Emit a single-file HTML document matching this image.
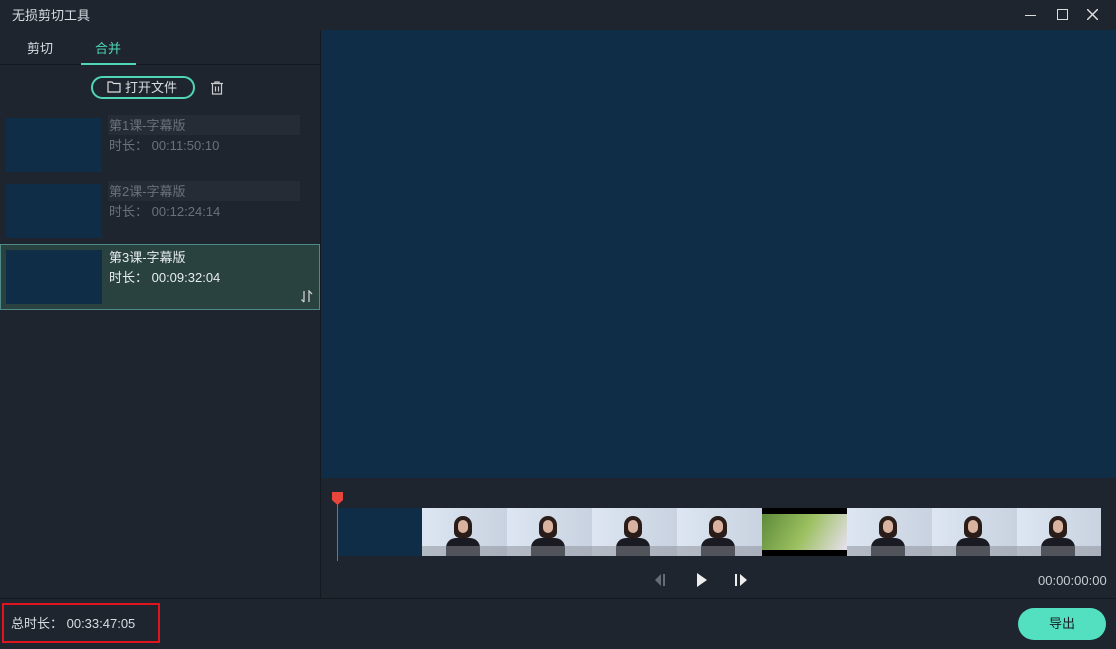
<!DOCTYPE html><html><head><meta charset="utf-8"><style>
*{margin:0;padding:0;box-sizing:border-box}
body{width:1116px;height:649px;background:#1f252e;font-family:"Liberation Sans","Noto Sans CJK SC",sans-serif;color:#d8dde2;position:relative;overflow:hidden;font-size:13px;line-height:17px}
.a{position:absolute}
.th{background:#0f2d47}
.fr{position:absolute;top:508px;width:85px;height:48px;background:linear-gradient(90deg,#dde6f2,#c8d2e0);overflow:hidden}
.fr .h{position:absolute;left:32px;top:8px;width:18px;height:22px;border-radius:9px 9px 6px 6px;background:#2a1c18}
.fr .f{position:absolute;left:36px;top:12px;width:10px;height:13px;border-radius:5px;background:#d9b3a0}
.fr .b{position:absolute;left:24px;top:30px;width:34px;height:18px;border-radius:10px 10px 0 0;background:#1a1a22}
.fr .d{position:absolute;left:0;bottom:0;width:85px;height:10px;background:#8a8e96;opacity:.5}
</style></head><body>
<div class="a" style="left:0;top:0;width:1116px;height:30px;background:#1e252e"></div>
<div class="a" style="left:12px;top:7px;font-size:13px">无损剪切工具</div>
<div class="a" style="left:1025px;top:15px;width:11px;height:1px;background:#ddd"></div>
<div class="a" style="left:1057px;top:9px;width:11px;height:11px;border:1.5px solid #ddd"></div>
<svg class="a" style="left:1087px;top:9px" width="11" height="11"><path d="M0 0L11 11M11 0L0 11" stroke="#ddd" stroke-width="1.5"/></svg>
<div class="a" style="left:0;top:64px;width:320px;height:1px;background:#151a21"></div>
<div class="a" style="left:27px;top:40px">剪切</div>
<div class="a" style="left:95px;top:40px;color:#4fd6b5">合并</div>
<div class="a" style="left:81px;top:63px;width:55px;height:2px;background:#4fd6b5"></div>
<div class="a" style="left:320px;top:30px;width:1px;height:569px;background:#151a21"></div>
<div class="a" style="left:91px;top:76px;width:104px;height:23px;border:2px solid #4fd6b5;border-radius:12px"></div>
<svg class="a" style="left:107px;top:80px" width="14" height="13"><path d="M1 2h4l1.5 1.5H13V12H1z" fill="none" stroke="#ddd" stroke-width="1.2"/></svg>
<div class="a" style="left:125px;top:79px">打开文件</div>
<svg class="a" style="left:209px;top:80px" width="16" height="16"><path d="M2 3.5h12M6 3.5V2h4v1.5M3.5 4v10h9V4M6.5 6.5v5M9.5 6.5v5" fill="none" stroke="#ccc" stroke-width="1.2"/></svg>
<div class="a th" style="left:6px;top:118px;width:96px;height:54px"></div>
<div class="a" style="left:108px;top:115px;width:192px;height:20px;background:#262c35"></div>
<div class="a" style="left:109px;top:117px;color:#6b7079">第1课-字幕版</div>
<div class="a" style="left:109px;top:137px;color:#6b7079">时长：&nbsp;00:11:50:10</div>
<div class="a th" style="left:6px;top:184px;width:96px;height:54px"></div>
<div class="a" style="left:108px;top:181px;width:192px;height:20px;background:#262c35"></div>
<div class="a" style="left:109px;top:183px;color:#6b7079">第2课-字幕版</div>
<div class="a" style="left:109px;top:203px;color:#6b7079">时长：&nbsp;00:12:24:14</div>
<div class="a" style="left:0;top:244px;width:320px;height:66px;background:#29423f;border:1px solid #4d8a88"></div>
<div class="a th" style="left:6px;top:250px;width:96px;height:54px"></div>
<div class="a" style="left:109px;top:249px;color:#e8ecef">第3课-字幕版</div>
<div class="a" style="left:109px;top:269px;color:#e8ecef">时长：&nbsp;00:09:32:04</div>
<svg class="a" style="left:300px;top:290px" width="14" height="13"><path d="M4 1v11M1.5 9.5L4 12M9 12V1l3 3" fill="none" stroke="#ccc" stroke-width="1.3"/></svg>
<div class="a th" style="left:321px;top:30px;width:795px;height:448px"></div>
<div class="a" style="left:321px;top:598px;width:795px;height:1px;background:#151a21"></div>
<div class="a" style="left:0;top:598px;width:321px;height:1px;background:#151a21"></div>
<div class="a th" style="left:337px;top:508px;width:85px;height:48px"></div>
<div class="fr" style="left:422px"><div class="h"></div><div class="f"></div><div class="b"></div><div class="d"></div></div>
<div class="fr" style="left:507px"><div class="h"></div><div class="f"></div><div class="b"></div><div class="d"></div></div>
<div class="fr" style="left:592px"><div class="h"></div><div class="f"></div><div class="b"></div><div class="d"></div></div>
<div class="fr" style="left:677px"><div class="h"></div><div class="f"></div><div class="b"></div><div class="d"></div></div>
<div class="fr" style="left:762px;background:#000"><div class="a" style="left:0;top:6px;width:85px;height:36px;background:linear-gradient(120deg,#5d8a3a,#9cc060 50%,#e8e0f0)"></div></div>
<div class="fr" style="left:847px"><div class="h"></div><div class="f"></div><div class="b"></div><div class="d"></div></div>
<div class="fr" style="left:932px"><div class="h"></div><div class="f"></div><div class="b"></div><div class="d"></div></div>
<div class="fr" style="left:1017px;width:84px"><div class="h"></div><div class="f"></div><div class="b"></div><div class="d"></div></div>
<div class="a" style="left:337px;top:500px;width:1px;height:61px;background:#e8453c"></div>
<svg class="a" style="left:332px;top:492px" width="11" height="13"><path d="M0 0h11v8l-5.5 5L0 8z" fill="#e8453c"/></svg>
<svg class="a" style="left:654px;top:574px" width="14" height="12"><path d="M7 0v12L1 6z" fill="#666c74"/><rect x="9" y="0" width="2" height="12" fill="#666c74"/></svg>
<svg class="a" style="left:696px;top:573px" width="12" height="14"><path d="M1 0l10 7-10 7z" fill="#eee"/></svg>
<svg class="a" style="left:735px;top:574px" width="14" height="12"><rect x="0" y="0" width="2" height="12" fill="#eee"/><path d="M5 0v12l7-6z" fill="#eee"/></svg>
<div class="a" style="left:1038px;top:572px;color:#c8ccd2;font-size:13px">00:00:00:00</div>
<div class="a" style="left:2px;top:603px;width:158px;height:40px;border:2px solid #e0141e"></div>
<div class="a" style="left:11px;top:615px;font-size:13px">总时长：&nbsp;00:33:47:05</div>
<div class="a" style="left:1018px;top:608px;width:88px;height:32px;border-radius:16px;background:#52e0c0;color:#1a1f24;text-align:center;line-height:32px">导出</div>
</body></html>
